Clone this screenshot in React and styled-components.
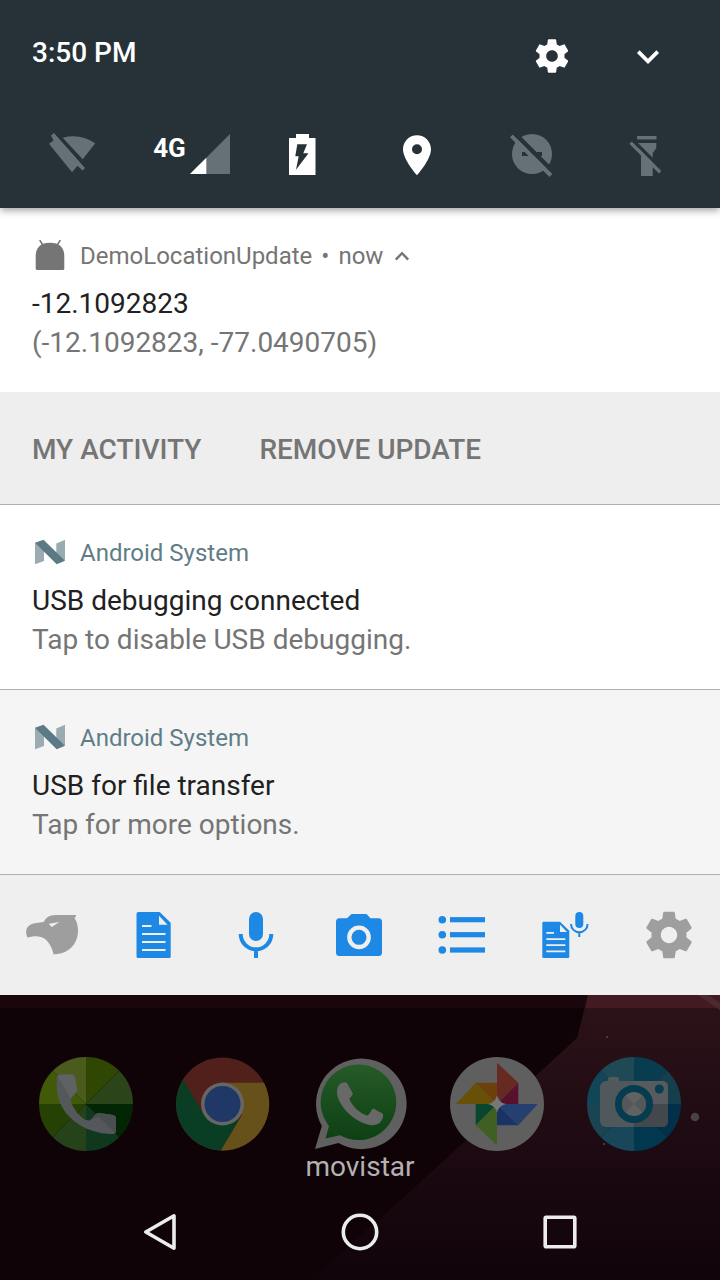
import React from "react";
import styled, { createGlobalStyle } from "styled-components";

const GlobalStyle = createGlobalStyle`
  *, *::before, *::after { box-sizing: border-box; }
  body {
    margin: 0;
    background: #100307;
    font-family: Roboto, "Liberation Sans", sans-serif;
  }
  svg { display: block; }
`;

const Screen = styled.div`
  display: flex;
  flex-direction: column;
  min-height: 100vh;
`;

const PlainButton = styled.button`
  display: flex;
  align-items: center;
  justify-content: center;
  padding: 0;
  border: 0;
  background: none;
  color: inherit;
  font: inherit;
  cursor: pointer;
`;

/* ---------- Quick settings ---------- */

const QuickSettings = styled.header`
  position: relative;
  z-index: 1;
  display: flex;
  flex-direction: column;
  gap: 50px;
  padding: 32px 0 30px;
  background: #263238;
  color: #fff;
  box-shadow: 0 2px 8px rgba(0, 0, 0, 0.4);
`;

const StatusRow = styled.div`
  display: flex;
  align-items: flex-start;
  gap: 48px;
  padding: 0 48px 0 32px;
`;

const Clock = styled.time`
  flex: 1;
  font-size: 28px;
  font-weight: 500;
  line-height: 42px;
`;

const HeaderButton = styled(PlainButton)`
  width: 48px;
  height: 48px;
`;

const Tiles = styled.div`
  display: grid;
  grid-template-columns: repeat(6, 1fr);
  padding: 0 16px 0 14px;
`;

const Tile = styled(PlainButton)`
  height: 48px;
  color: ${({ $off }) => ($off ? "#677075" : "#fff")};
`;

const SignalTile = styled(Tile)`
  align-items: flex-start;
  gap: 4px;
  padding: 4px 0 0 10px;
`;

const NetworkType = styled.span`
  font-size: 26px;
  font-weight: 700;
  line-height: 28px;
`;

/* ---------- Notifications ---------- */

const Notification = styled.article`
  padding: 32px 32px 30px;
  background: ${({ $dim }) => ($dim ? "#f5f5f5" : "#fff")};
  border-bottom: ${({ $divided }) => ($divided ? "1px solid #b0b0b0" : "0")};
`;

const AppLine = styled.header`
  display: flex;
  align-items: center;
  gap: 9px;
  margin-bottom: 12px;
  color: ${({ $color }) => $color};
  font-size: 24px;
  line-height: 32px;
`;

const AppIcon = styled.svg`
  width: 36px;
  height: 32px;
  margin-right: 3px;
`;

const Title = styled.h2`
  margin: 0;
  color: #212121;
  font-size: 28px;
  font-weight: 400;
  line-height: 39px;
`;

const Body = styled.p`
  margin: 0;
  color: #757575;
  font-size: 28px;
  line-height: 39px;
`;

const Actions = styled.div`
  display: flex;
  gap: 58px;
  padding: 38px 32px 34px;
  background: #eee;
  border-bottom: 1px solid #b0b0b0;
`;

const ActionButton = styled(PlainButton)`
  color: #757575;
  font-size: 28px;
  font-weight: 500;
  line-height: 40px;
`;

const Toolbar = styled.nav`
  display: grid;
  grid-template-columns: repeat(7, 1fr);
  padding: 32px 0;
  background: #efefef;
`;

const ToolButton = styled(PlainButton)`
  height: 56px;
  color: ${({ $muted }) => ($muted ? "#9e9e9e" : "#1e88e5")};
`;

/* ---------- Home screen ---------- */

const Home = styled.main`
  position: relative;
  isolation: isolate;
  flex: 1;
  display: flex;
  flex-direction: column;
  padding-top: 62px;
`;

const Wallpaper = styled.svg`
  position: absolute;
  z-index: -1;
  inset: 0;
  width: 100%;
  height: 100%;
`;

const Dock = styled.div`
  display: grid;
  grid-template-columns: repeat(5, 1fr);
  padding: 0 18px;
`;

const DockButton = styled(PlainButton)`
  height: 94px;
`;

const Carrier = styled.div`
  color: #b4b1b2;
  font-size: 28px;
  line-height: 32px;
  text-align: center;
`;

const SystemNav = styled.nav`
  display: grid;
  grid-template-columns: repeat(3, 1fr);
  margin-top: auto;
  padding: 0 60px;
`;

const SystemButton = styled(PlainButton)`
  height: 96px;
  color: #ececec;
`;

/* ---------- Icons ---------- */

const Glyph = ({ size = 48, box = size, children }) => (
  <svg width={size} height={size} viewBox={`0 0 ${box} ${box}`} fill="currentColor" aria-hidden="true">
    {children}
  </svg>
);

const Gear = ({ size }) => (
  <Glyph size={size} box={24}>
    <path d="M19.43 12.98c.04-.32.07-.64.07-.98s-.03-.66-.07-.98l2.11-1.65c.19-.15.24-.42.12-.64l-2-3.46c-.12-.22-.39-.3-.61-.22l-2.49 1c-.52-.4-1.08-.73-1.69-.98l-.38-2.65C14.46 2.18 14.25 2 14 2h-4c-.25 0-.46.18-.49.42l-.38 2.65c-.61.25-1.17.59-1.69.98l-2.49-1c-.23-.09-.49 0-.61.22l-2 3.46c-.13.22-.07.49.12.64l2.11 1.65c-.04.32-.07.65-.07.98s.03.66.07.98l-2.11 1.65c-.19.15-.24.42-.12.64l2 3.46c.12.22.39.3.61.22l2.49-1c.52.4 1.08.73 1.69.98l.38 2.65c.03.24.24.42.49.42h4c.25 0 .46-.18.49-.42l.38-2.65c.61-.25 1.17-.59 1.69-.98l2.49 1c.23.09.49 0 .61-.22l2-3.46c.12-.22.07-.49-.12-.64l-2.11-1.65zM12 15.5c-1.93 0-3.5-1.57-3.5-3.5s1.57-3.5 3.5-3.5 3.5 1.57 3.5 3.5-1.57 3.5-3.5 3.5z" />
  </Glyph>
);

const ChevronDown = () => (
  <Glyph size={44} box={24}>
    <path d="M16.59 8.9 12 13.5 7.41 8.9 6 10.3l6 6.100 6-6.100z" />
  </Glyph>
);

const WifiOff = () => (
  <Glyph>
    <path d="M1 13.7 5.5 10.5 3 5.5 6 3 37 38 34.5 40.5 29.5 35.7 24 42.3z" />
    <path d="M14.7 7.7Q32 3 47.3 13.3L34.7 29.3z" />
  </Glyph>
);

const Signal = () => (
  <Glyph size={40}>
    <path d="M40 0V40H0z" fill="#677075" />
    <path d="M16.3 23.7V40H0z" />
  </Glyph>
);

const BatteryCharging = () => (
  <Glyph>
    <path
      fillRule="evenodd"
      d="M18 4H31V8H37.5V45H11V8H18zM19.3 14.3 17.3 26.3H20.7L18 39.7 30.5 23.3H25.3L29 14.3z"
    />
  </Glyph>
);

const Place = () => (
  <Glyph>
    <path
      fillRule="evenodd"
      d="M24 5.3C16.3 5.3 10 11.5 10 19.3 10 29.8 24 45.3 24 45.3S38 29.8 38 19.3C38 11.5 31.7 5.3 24 5.3zM24 14.3A5 5 0 1 1 24 24.3 5 5 0 1 1 24 14.3z"
    />
  </Glyph>
);

const DoNotDisturbOff = () => (
  <Glyph>
    <circle cx="24" cy="24" r="20" />
    <path d="M14 22H34V26H14zM4.7 4.7 8 1.500 47 40.500 44.3 44.3z" fill="#263238" />
    <path d="M2 7.2 4.7 4.5 44.3 44 41.5 46.9z" />
  </Glyph>
);

const FlashlightOff = () => (
  <Glyph>
    <path d="M14.3 6H33.3V9.3H14.3zM15 13H33.3V18.3L29.7 23V46H18V23L15 20z" />
    <path d="M8.7 11.4 11 9 40.300 38.300 38.3 41z" fill="#263238" />
    <path d="M14.3 6H33.3V9.3H14.3zM6.3 13.8 8.7 11.4 38.3 41 36 43.5z" />
  </Glyph>
);

const AndroidIcon = () => (
  <AppIcon viewBox="0 0 36 32" fill="currentColor" aria-hidden="true">
    <path d="M3.7 28.5V16C3.7 7 9 2.7 18 2.7S32.3 7 32.3 16V28.5Q32.3 30 30.8 30H5.2Q3.7 30 3.7 28.5z" />
    <path d="M7.7 0 10.8 5M28.3 0 25.2 5" stroke="currentColor" strokeWidth="1.5" />
  </AppIcon>
);

const NougatIcon = () => (
  <AppIcon viewBox="0 0 36 32" aria-hidden="true">
    <path d="M3 5.7 12 10V24L3 27.2zM24.3 6.5 33 2.7V23.7L24.3 18z" fill="#9aabb2" />
    <path d="M3 5.7 11.5 2.7 33 23.7 24.7 27.2z" fill="#5b7a85" />
  </AppIcon>
);

const CollapseIcon = () => (
  <svg width="20" height="20" viewBox="0 0 20 20" fill="none" stroke="currentColor" strokeWidth="2.4" aria-hidden="true">
    <path d="M3.8 13.6 10 7.2 16.2 13.6" />
  </svg>
);

const Eagle = () => (
  <Glyph size={56}>
    <path
      fillRule="evenodd"
      d="M4.5 30.7C2 25 3 20.5 7 18 10.5 15.5 15.5 16 21 14.7 22.5 10.5 27 8.2 32.5 8H53.2Q52.8 9.8 51.5 11C53.5 14 55 18 55 23.5 55 37 45.500 47.3 30.500 47.3 29 40 26 35.5 22 32 17.5 28.5 10.5 28.5 4.5 30.7zM25.7 16.7 28.7 20 36.500 15z"
    />
  </Glyph>
);

const Note = () => (
  <Glyph size={56}>
    <path d="M12.5 5H33.7L44.7 15.7V49.5Q44.7 51 43.2 51H12Q10.5 51 10.5 49.5V7Q10.5 5 12.5 5z" />
    <path d="M33 8.7V17.7H41.5zM16 18H25.5V20H16zM16 26H39.5V28H16zM16 34H39.5V36H16zM16 42H39.5V44H16z" fill="#efefef" />
  </Glyph>
);

const Mic = () => (
  <Glyph size={56}>
    <rect x="20" y="5" width="14" height="29" rx="7" />
    <path d="M11.7 27A15.3 15.3 0 0 0 42.3 27M27 42V51" fill="none" stroke="currentColor" strokeWidth="4" />
  </Glyph>
);

const Camera = () => (
  <Glyph size={56}>
    <path d="M7.5 11.3H15L19.5 7H34.5L38.5 11.3H46.5Q50 11.3 50 14.8V45.5Q50 49 46.5 49H7.5Q4 49 4 45.5V14.8Q4 11.3 7.5 11.3z" />
    <circle cx="27" cy="30.3" r="9.7" fill="none" stroke="#efefef" strokeWidth="4.3" />
  </Glyph>
);

const List = () => (
  <Glyph size={56}>
    {[12.7, 27.7, 43].map((y) => (
      <React.Fragment key={y}>
        <circle cx="7.3" cy={y} r="3.8" />
        <rect x="15" y={y - 2.6} width="35" height="5.2" />
      </React.Fragment>
    ))}
  </Glyph>
);

const NoteMic = () => (
  <Glyph size={56}>
    <path d="M5.5 14.7H22L31.3 23.7V49.8Q31.3 51 30 51H5.5Q4.3 51 4.3 49.8V16Q4.3 14.7 5.5 14.7z" />
    <path d="M22 17.7V25H29zM8.3 25H16V26.7H8.3zM8.3 31.2H27.3V33H8.3zM8.3 37.3H27.3V39H8.3zM8.3 43.5H27.3V45.2H8.3z" fill="#efefef" />
    <rect x="37.3" y="5" width="8" height="16" rx="4" />
    <path d="M33 17A8.3 8.3 0 0 0 49.6 17M41.3 25V30" fill="none" stroke="currentColor" strokeWidth="2" />
  </Glyph>
);

/* Eight 45° slices, clockwise from twelve o'clock. */
const SLICES = [
  "M47 47V0A47 47 0 0 1 80.2 13.8z",
  "M47 47 80.2 13.8A47 47 0 0 1 94 47z",
  "M47 47H94A47 47 0 0 1 80.2 80.2z",
  "M47 47 80.2 80.2A47 47 0 0 1 47 94z",
  "M47 47V94A47 47 0 0 1 13.8 80.2z",
  "M47 47 13.8 80.2A47 47 0 0 1 0 47z",
  "M47 47H0A47 47 0 0 1 13.8 13.8z",
  "M47 47 13.8 13.8A47 47 0 0 1 47 0z",
];

const Pinwheel = ({ colors }) => SLICES.map((d, i) => <path key={d} d={d} fill={colors[i]} />);

const PhoneApp = () => (
  <Glyph size={94}>
    <Pinwheel colors={["#304703", "#2b441a", "#022503", "#10381f", "#25421b", "#264104", "#405a08", "#4b5a1d"]} />
    <path
      d="M21 17.5H32.5Q35.5 17.5 36 20.5L38.3 34 31.7 41.5C31 47 39 59 46.7 63 49 63.5 50.5 64 52 62.5L57 57Q58.5 55.7 60.5 56L74 58Q77 58.5 77 61.5V73.5Q77 77 73.5 77C45 77 17.7 58 17.7 29V21Q17.7 17.5 21 17.5z"
      fill="#55585a"
    />
    <path d="M31.7 41.5 38.3 34 36 20.5Q35.5 17.5 32.5 17.5H21Q19.5 17.5 18.7 18.7z" fill="#606162" />
    <path d="M52 62.5 57 57Q58.5 55.7 60.5 56L74 58Q77 58.5 77 61.5V73.5Q77 75 76 76L60 60z" fill="#4a4e51" />
  </Glyph>
);

const ChromeApp = () => (
  <Glyph size={94}>
    <circle cx="46.5" cy="47" r="46.5" fill="#52201b" />
    <path d="M46.5 25.7H88A46.5 46.5 0 0 1 44.7 93.5L66 58z" fill="#66511b" />
    <path d="M7.2 22.3 26.5 56 46.5 68 63.5 61.5 44.7 93.5A46.5 46.5 0 0 1 7.2 22.3z" fill="#093e24" />
    <circle cx="46.5" cy="47" r="21.5" fill="#666" />
    <circle cx="46.5" cy="47" r="18" fill="#1f3866" />
  </Glyph>
);

const WhatsAppApp = () => (
  <Glyph size={94}>
    <defs>
      <linearGradient id="chat" x1="0" y1="0" x2="0" y2="1">
        <stop offset="0" stopColor="#265a28" />
        <stop offset="1" stopColor="#0d4114" />
      </linearGradient>
    </defs>
    <path d="M2 92 8.8 69A45.3 45.3 0 1 1 25.5 86z" fill="#606060" />
    <path d="M12.5 81.5 16 69A37.8 37.8 0 1 1 27 78.3z" fill="url(#chat)" />
    <path
      d="M24 35C24 31 25.5 27.5 28.5 26 31 25 33 25 34.3 26.5L39.7 36.3Q40 38 36.3 41.8C38.5 48.5 46 56 54 58.5Q55.5 58.7 59 52.5 60.5 51 63 53L69.5 56.5C71 58 70 62 67 65.5 64 68 60 68.5 57 68 40 65 24 47 24 35z"
      fill="#686868"
    />
  </Glyph>
);

const PhotosApp = () => (
  <Glyph size={94}>
    <circle cx="47" cy="47" r="47" fill="#5f5f5f" />
    <path d="M47 5.7 68.3 25.7 47 47z" fill="#672a22" />
    <path d="M68.3 25.7V47H47z" fill="#57112d" />
    <path d="M47 47H87.7L68.3 68.3z" fill="#243f70" />
    <path d="M47 47 68.3 68.3H47z" fill="#1b3364" />
    <path d="M47 47V88.3L25.7 68.3z" fill="#3f6022" />
    <path d="M25.7 47H47L25.7 68.3z" fill="#08472e" />
    <path d="M6 47 25.7 25.7 47 47z" fill="#685009" />
    <path d="M25.7 25.7H47V47z" fill="#6b400b" />
    <path d="M47 38Q48.5 45.5 56 47 48.5 48.5 47 56 45.5 48.5 38 47 45.5 45.5 47 38z" fill="#777" />
  </Glyph>
);

const CameraApp = () => (
  <Glyph size={94}>
    <Pinwheel colors={["#073d4e", "#163f4d", "#02304a", "#023750", "#19475a", "#1b4452", "#114659", "#1f4955"]} />
    <rect x="21" y="20" width="11" height="10" rx="2" fill="#525a5c" />
    <rect x="13" y="24" width="68" height="46" rx="6" fill="#50585b" />
    <path d="M47 47H81V64Q81 70 75 70H47z" fill="#42484b" />
    <path d="M47 24H75Q81 24 81 30V47H47z" fill="#575b5d" />
    <circle cx="47" cy="47" r="15.5" fill="#616263" stroke="#053c50" strokeWidth="7" />
    <path d="M47 47 55.5 38.5A12 12 0 0 1 55.5 55.5zM47 47 38.5 55.5A12 12 0 0 1 38.5 38.5z" fill="#555859" />
    <circle cx="72.3" cy="32" r="4.5" fill="#063e50" />
  </Glyph>
);

const BackIcon = () => (
  <Glyph>
    <path d="M9.8 24 38 7.8V40.2z" fill="none" stroke="currentColor" strokeWidth="3.6" strokeLinejoin="round" />
  </Glyph>
);

const HomeIcon = () => (
  <Glyph>
    <circle cx="24" cy="24" r="16.7" fill="none" stroke="currentColor" strokeWidth="3.6" />
  </Glyph>
);

const RecentsIcon = () => (
  <Glyph>
    <rect x="9.2" y="9.2" width="29.6" height="29.6" rx="1" fill="none" stroke="currentColor" strokeWidth="3.6" />
  </Glyph>
);

/* ---------- Data ---------- */

const TOOLS = [
  { label: "Open app", Icon: Eagle, muted: true },
  { label: "New note", Icon: Note },
  { label: "Record audio", Icon: Mic },
  { label: "Take photo", Icon: Camera },
  { label: "New list", Icon: List },
  { label: "Speech to text", Icon: NoteMic },
  { label: "Settings", Icon: () => <Gear size={56} />, muted: true },
];

const APPS = [
  { label: "Phone", Icon: PhoneApp },
  { label: "Chrome", Icon: ChromeApp },
  { label: "WhatsApp", Icon: WhatsAppApp },
  { label: "Photos", Icon: PhotosApp },
  { label: "Camera", Icon: CameraApp },
];

const SystemNotification = ({ title, text, dim }) => (
  <Notification $dim={dim} $divided>
    <AppLine $color="#607d87">
      <NougatIcon />
      <span>Android System</span>
    </AppLine>
    <Title>{title}</Title>
    <Body>{text}</Body>
  </Notification>
);

export default function App() {
  return (
    <Screen>
      <GlobalStyle />
      <QuickSettings>
        <StatusRow>
          <Clock>3:50 PM</Clock>
          <HeaderButton aria-label="Settings"><Gear size={40} /></HeaderButton>
          <HeaderButton aria-label="Expand"><ChevronDown /></HeaderButton>
        </StatusRow>
        <Tiles>
          <Tile $off aria-label="Wi-Fi"><WifiOff /></Tile>
          <SignalTile aria-label="Mobile data">
            <NetworkType>4G</NetworkType>
            <Signal />
          </SignalTile>
          <Tile aria-label="Battery"><BatteryCharging /></Tile>
          <Tile aria-label="Location"><Place /></Tile>
          <Tile $off aria-label="Do not disturb"><DoNotDisturbOff /></Tile>
          <Tile $off aria-label="Flashlight"><FlashlightOff /></Tile>
        </Tiles>
      </QuickSettings>

      <Notification>
        <AppLine $color="#757575">
          <AndroidIcon />
          <span>DemoLocationUpdate</span>
          <span>•</span>
          <span>now</span>
          <CollapseIcon />
        </AppLine>
        <Title>-12.1092823</Title>
        <Body>(-12.1092823, -77.0490705)</Body>
      </Notification>
      <Actions>
        <ActionButton>MY ACTIVITY</ActionButton>
        <ActionButton>REMOVE UPDATE</ActionButton>
      </Actions>
      <SystemNotification title="USB debugging connected" text="Tap to disable USB debugging." />
      <SystemNotification title="USB for file transfer" text="Tap for more options." dim />

      <Toolbar aria-label="Note shortcuts">
        {TOOLS.map(({ label, Icon, muted }) => (
          <ToolButton key={label} aria-label={label} $muted={muted}><Icon /></ToolButton>
        ))}
      </Toolbar>

      <Home>
        <Wallpaper viewBox="0 0 720 285" preserveAspectRatio="none" aria-hidden="true">
          <defs>
            <linearGradient id="glow" x1="0" y1="0" x2="0" y2="1">
              <stop offset="0" stopColor="#2d1318" />
              <stop offset="0.35" stopColor="#230d15" />
              <stop offset="0.7" stopColor="#18070f" />
              <stop offset="1" stopColor="#10040a" />
            </linearGradient>
          </defs>
          <path d="M0 0H720V285H0z" fill="#0f0307" />
          <path d="M0 0H720V13H0z" fill="#19070c" />
          <path d="M588 0 577 43 412 195 310 285H720V0z" fill="url(#glow)" />
          <path d="M588 0H720V13H585z" fill="#431a22" />
          <path d="M698 0H708L720 8V15z" fill="#4a2a30" />
          <circle cx="607" cy="42" r="1" fill="#5a4a4c" />
          <circle cx="604" cy="149" r="1" fill="#5a4a4c" />
          <circle cx="695" cy="122" r="4.3" fill="#4a4144" />
        </Wallpaper>
        <Dock>
          {APPS.map(({ label, Icon }) => (
            <DockButton key={label} aria-label={label}><Icon /></DockButton>
          ))}
        </Dock>
        <Carrier>movistar</Carrier>
        <SystemNav aria-label="System">
          <SystemButton aria-label="Back"><BackIcon /></SystemButton>
          <SystemButton aria-label="Home"><HomeIcon /></SystemButton>
          <SystemButton aria-label="Recent apps"><RecentsIcon /></SystemButton>
        </SystemNav>
      </Home>
    </Screen>
  );
}
